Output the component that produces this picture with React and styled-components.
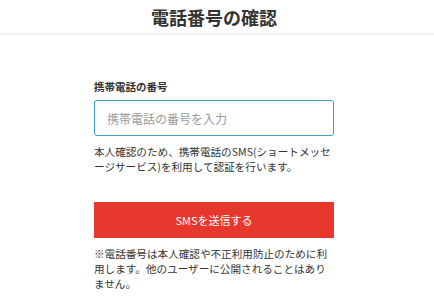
import React from "react";
import styled, { createGlobalStyle } from "styled-components";

const Global = createGlobalStyle`
  html, body { margin: 0; padding: 0; background: #fff; }
  body { font-family: "Noto Sans CJK JP", "Noto Sans", sans-serif; color: #333; }
  * { box-sizing: border-box; }
`;

const Header = styled.header`
  height: 35px;
  border-bottom: 2px solid #f2f2f2;
  padding-right: 6px;
  display: flex;
  justify-content: center;
  align-items: center;
`;

const Title = styled.h1`
  margin: 0;
  font-size: 18px;
  font-weight: 700;
  line-height: 24px;
  color: #333;
`;

const Body = styled.div`
  padding-right: 6px;
`;

const Form = styled.main`
  width: 240px;
  margin: 0 auto;
  padding-top: 44px;
  display: flex;
  flex-direction: column;
`;

const Label = styled.label`
  font-size: 10.5px;
  font-weight: 700;
  line-height: 16px;
  color: #333;
  margin-bottom: 5px;
`;

const Input = styled.input`
  height: 36px;
  width: 100%;
  border: 1px solid #3d9fc6;
  border-radius: 3px;
  padding: 0 12px;
  font-family: inherit;
  font-size: 12px;
  color: #333;
  outline: none;
  &::placeholder { color: #9a9a9a; }
`;

const Note = styled.p`
  margin: ${(p) => p.$top}px 0 0;
  font-size: 10.6px;
  line-height: 15px;
  color: #333;
`;

const Button = styled.button`
  margin-top: 28px;
  height: 36px;
  width: 100%;
  border: none;
  border-radius: 0;
  background: #e8382e;
  color: #fff;
  font-family: inherit;
  font-size: 11px;
  cursor: pointer;
`;

export default function App() {
  return (
    <>
      <Global />
      <Header>
        <Title>電話番号の確認</Title>
      </Header>
      <Body>
        <Form>
          <Label htmlFor="tel">携帯電話の番号</Label>
          <Input id="tel" type="tel" placeholder="携帯電話の番号を入力" />
          <Note $top={8}>
            本人確認のため、携帯電話のSMS(ショートメッセージサービス)を利用して認証を行います。
          </Note>
          <Button type="button">SMSを送信する</Button>
          <Note $top={8}>
            ※電話番号は本人確認や不正利用防止のために利用します。他のユーザーに公開されることはありません。
          </Note>
        </Form>
      </Body>
    </>
  );
}
